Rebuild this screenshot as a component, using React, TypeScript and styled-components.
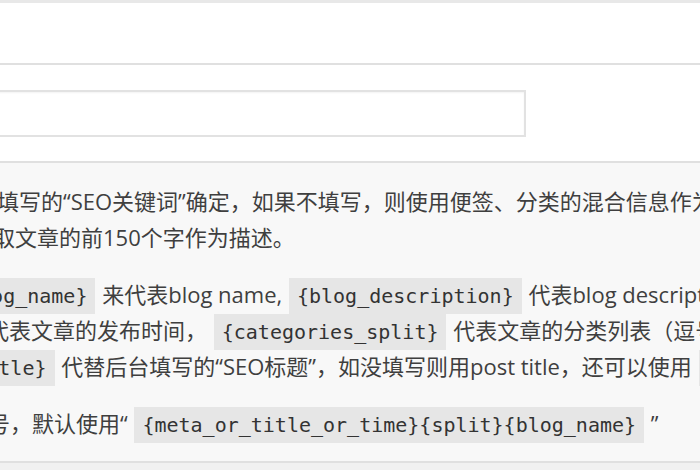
import styled, { createGlobalStyle } from 'styled-components';

const GlobalStyle = createGlobalStyle`
  html, body {
    margin: 0;
    padding: 0;
    background: #f1f1f1;
  }
  body {
    width: 700px;
    height: 470px;
    overflow: hidden;
    font-family: "Open Sans", "Noto Sans CJK SC", sans-serif;
  }
`;

type Part = { code?: boolean; text: string };

interface LineData {
  shift: number;
  parts: Part[];
}

const paragraphs: LineData[][] = [
  [
    {
      shift: -3,
      parts: [{ text: '填写的“SEO关键词”确定，如果不填写，则使用便签、分类的混合信息作为描述' }],
    },
    {
      shift: -7,
      parts: [{ text: '取文章的前150个字作为描述。' }],
    },
  ],
  [
    {
      shift: -54,
      parts: [
        { code: true, text: '{blog_name}' },
        { text: ' 来代表blog name, ' },
        { code: true, text: '{blog_description}' },
        { text: ' 代表blog description' },
      ],
    },
    {
      shift: -13,
      parts: [
        { text: '代表文章的发布时间， ' },
        { code: true, text: '{categories_split}' },
        { text: ' 代表文章的分类列表（逗号分隔）' },
      ],
    },
    {
      shift: -107,
      parts: [
        { code: true, text: '{post_title}' },
        { text: ' 代替后台填写的“SEO标题”，如没填写则用post title，还可以使用 ' },
        { code: true, text: '{split}' },
      ],
    },
  ],
  [
    {
      shift: -12,
      parts: [
        { text: '号，默认使用“ ' },
        { code: true, text: '{meta_or_title_or_time}{split}{blog_name}' },
        { text: ' ”' },
      ],
    },
  ],
];

const App = () => {
  return (
    <>
      <GlobalStyle />
      <Page>
        <HeadRow />
        <FieldRow>
          <TextInput type="text" />
        </FieldRow>
        <HelpBox>
          {paragraphs.map((lines, i) => (
            <Paragraph key={i}>
              {lines.map((line, j) => (
                <Line key={j} $shift={line.shift}>
                  {line.parts.map((part, k) =>
                    part.code ? <Code key={k}>{part.text}</Code> : <span key={k}>{part.text}</span>
                  )}
                </Line>
              ))}
            </Paragraph>
          ))}
        </HelpBox>
      </Page>
    </>
  );
};

export default App;

const Page = styled.div`
  width: 700px;
  display: flex;
  flex-direction: column;
  overflow: hidden;
`;

const HeadRow = styled.div`
  height: 60px;
  background: #fff;
  border-top: 3px solid #e8e8e8;
  border-bottom: 2px solid #e0e0e0;
`;

const FieldRow = styled.div`
  background: #fff;
  padding: 25px 0 24px;
  border-bottom: 2px solid #e0e0e0;
  display: flex;
`;

const TextInput = styled.input`
  box-sizing: border-box;
  width: 536px;
  height: 47px;
  margin: 0 0 0 -10px;
  border: 2px solid #e2e2e2;
  background: #fff;
  box-shadow: inset 0 1px 2px rgba(0, 0, 0, 0.05);
  outline: none;
`;

const HelpBox = styled.div`
  background: #f8f8f8;
  padding: 20px 0 20px;
  border-bottom: 2px solid #e0e0e0;
  display: flex;
  flex-direction: column;
  gap: 21px;
  overflow: hidden;
`;

const Paragraph = styled.div`
  display: flex;
  flex-direction: column;
`;

const Line = styled.div<{ $shift: number }>`
  margin-left: ${(p) => p.$shift}px;
  height: 36px;
  white-space: nowrap;
  font-size: 22px;
  line-height: 36px;
  color: #3f3f3f;
`;

const Code = styled.code`
  font-family: "DejaVu Sans Mono", "Liberation Mono", monospace;
  font-size: 20px;
  line-height: 1;
  color: #333;
  background: #e6e6e6;
  padding: 6px 8px;
  margin: 0 1px;
`;
